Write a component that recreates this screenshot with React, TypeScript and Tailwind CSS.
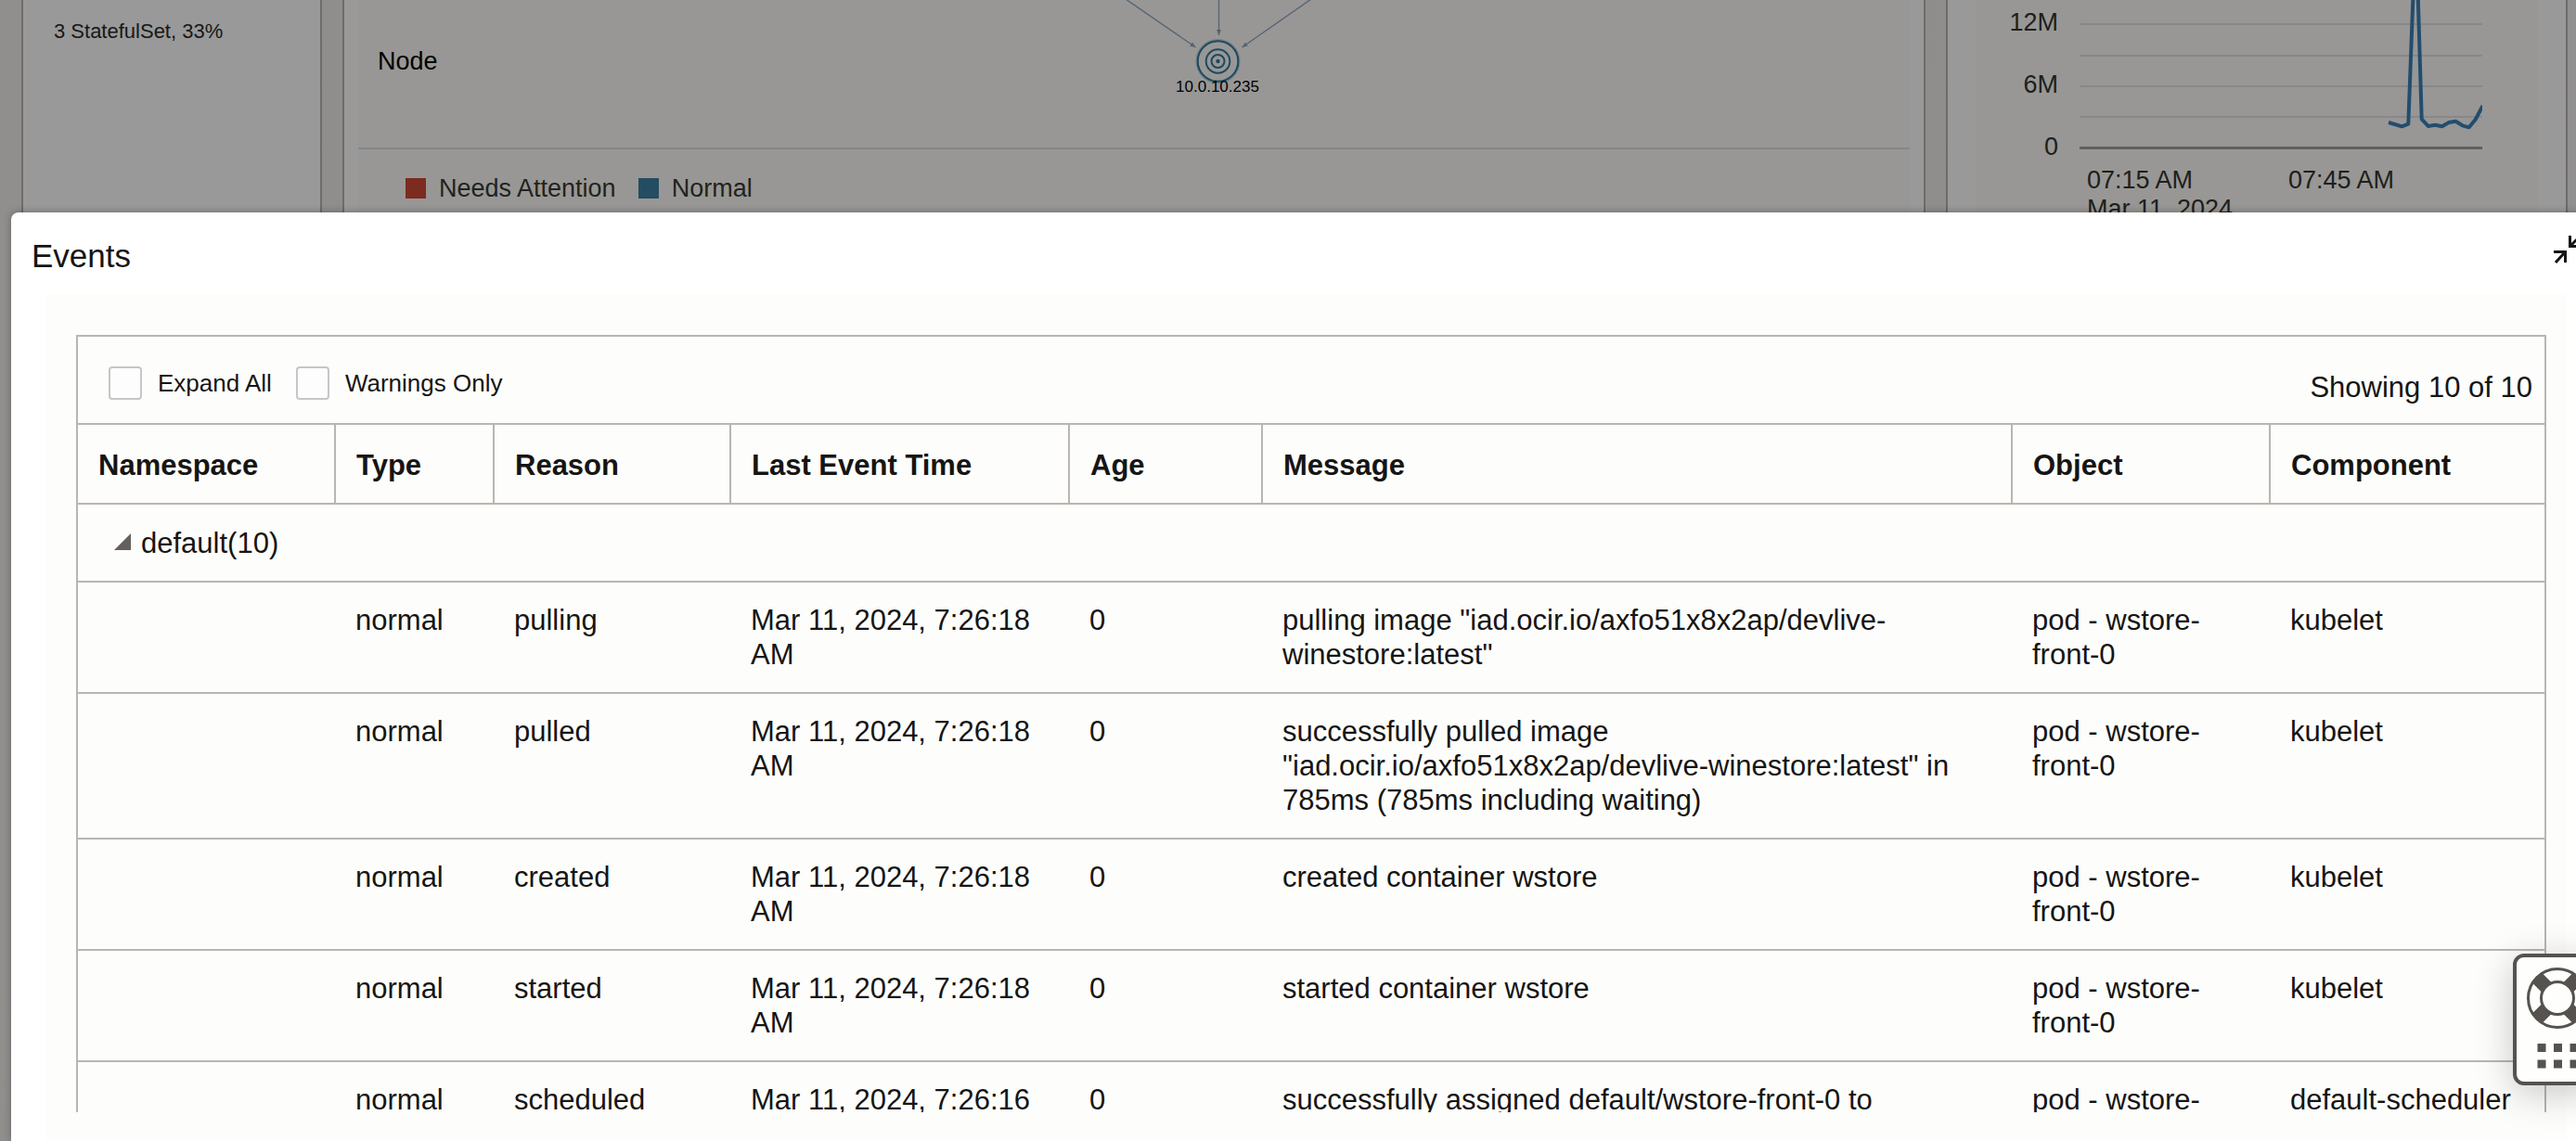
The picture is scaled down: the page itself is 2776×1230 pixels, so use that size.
import React, { useState } from "react";

type EventRow = {
  reason: string;
  time: string;
  message: string;
  component: string;
};

const events: EventRow[] = [
  {
    reason: "pulling",
    time: "Mar 11, 2024, 7:26:18 AM",
    message: 'pulling image "iad.ocir.io/axfo51x8x2ap/devlive-winestore:latest"',
    component: "kubelet",
  },
  {
    reason: "pulled",
    time: "Mar 11, 2024, 7:26:18 AM",
    message:
      'successfully pulled image "iad.ocir.io/axfo51x8x2ap/devlive-winestore:latest" in 785ms (785ms including waiting)',
    component: "kubelet",
  },
  {
    reason: "created",
    time: "Mar 11, 2024, 7:26:18 AM",
    message: "created container wstore",
    component: "kubelet",
  },
  {
    reason: "started",
    time: "Mar 11, 2024, 7:26:18 AM",
    message: "started container wstore",
    component: "kubelet",
  },
  {
    reason: "scheduled",
    time: "Mar 11, 2024, 7:26:16 AM",
    message: "successfully assigned default/wstore-front-0 to 10.0.10.235",
    component: "default-scheduler",
  },
];

function NodeGraph() {
  return (
    <svg width="240" height="110" viewBox="0 0 240 110" aria-label="Node 10.0.10.235">
      <defs>
        <marker id="arrow" markerWidth="7" markerHeight="6" refX="6" refY="3" orient="auto" markerUnits="userSpaceOnUse">
          <path d="M0 0.5L6 3L0 5.5Z" fill="#8fa3c2" />
        </marker>
      </defs>
      <g stroke="#93a7c4" strokeWidth="1.4" fill="none">
        <path d="M20 -1L95.500 51" markerEnd="url(#arrow)" />
        <path d="M120.500 -1V38" markerEnd="url(#arrow)" />
        <path d="M220 -1L145.500 51" markerEnd="url(#arrow)" />
      </g>
      <g fill="none" stroke="#307ba2">
        <circle cx="119.500" cy="66" r="22.500" strokeWidth="3" strokeOpacity="0.3" />
        <circle cx="119.500" cy="66" r="21.800" strokeWidth="2" />
        <circle cx="119.500" cy="66" r="12.800" strokeWidth="2" />
        <circle cx="119.500" cy="66" r="7" strokeWidth="2" />
      </g>
      <circle cx="119.500" cy="66" r="2.200" fill="#307ba2" />
      <text x="119" y="99" textAnchor="middle" fontSize="17" fill="#000">
        10.0.10.235
      </text>
    </svg>
  );
}

function UsageChart() {
  return (
    <div className="flex gap-[23px]">
      <div className="flex w-[89px] flex-col gap-[35px] pt-2 text-right text-[27px] leading-8 text-[#35352f]">
        <span>12M</span>
        <span>6M</span>
        <span>0</span>
      </div>
      <div className="w-[434px]">
        <svg width="434" height="162" viewBox="0 0 434 162" className="block overflow-hidden" aria-hidden="true">
          <g stroke="#e2e2ea" strokeWidth="2">
            <path d="M0 26H434M0 60H434M0 93H434M0 126H434" />
          </g>
          <path d="M0 159.500H434" stroke="#9e9e9a" strokeWidth="3" />
          <path
            d="M333 132L339.700 134L347.300 136.300L354.300 133.700L359.500 -5L361.700 -70L364.700 -5L368.700 128.300L375.700 136L383.300 134.700L390.700 136.300L398 132L405.300 130.700L412.700 135.300L419.700 137.300L426.700 128.700L434.500 114"
            fill="none"
            stroke="#3b81b8"
            strokeWidth="4"
            strokeLinejoin="round"
          />
        </svg>
        <div className="mt-[17px] flex pl-2 text-[27px] leading-[31px] whitespace-nowrap text-[#35352f]">
          <span className="w-[217px]">
            07:15 AM
            <br />
            Mar 11, 2024
          </span>
          <span>07:45 AM</span>
        </div>
      </div>
    </div>
  );
}

function Dashboard() {
  return (
    <main className="flex h-full gap-[22px] bg-[linear-gradient(100deg,#f1efec,#ece9e4_40%,#f2f0f1)] pr-[9px] pl-[23px]">
      <section className="w-[324px] shrink-0 border-x-2 border-[#bab2ac] bg-white pt-5 pl-[33px] text-[22px] leading-7 text-[#2b2b28]">
        3 StatefulSet, 33%
      </section>
      <section className="min-w-0 flex-1 border-x-2 border-[#bab2ac] bg-white px-[15px]">
        <div className="h-full bg-[#fdfcf8]">
          <div className="flex h-[161px] border-b-2 border-[#d9e0e5]">
            <h3 className="w-[182px] pt-[50px] pl-[21px] text-[27px] leading-8 text-black">Node</h3>
            <div className="flex flex-1 justify-center">
              <NodeGraph />
            </div>
          </div>
          <ul className="flex items-center gap-6 pt-[26px] pl-[51px] text-[27px] leading-8 text-[#3a3a36]">
            <li className="flex items-center gap-[14px]">
              <i className="size-[22px] bg-[#cf4834]" />
              Needs Attention
            </li>
            <li className="flex items-center gap-[14px]">
              <i className="size-[22px] bg-[#3c80a3]" />
              Normal
            </li>
          </ul>
        </div>
      </section>
      <section className="w-[670px] shrink-0 border-x-2 border-[#bab2ac] bg-white px-[30px]">
        <div className="h-full bg-[#fdfcf8]">
          <UsageChart />
        </div>
      </section>
    </main>
  );
}

function CheckOption({ label }: { label: string }) {
  const [checked, setChecked] = useState(false);
  return (
    <label className="flex h-9 items-center gap-[17px] text-[26px] leading-8">
      <input
        type="checkbox"
        checked={checked}
        onChange={(e) => setChecked(e.target.checked)}
        className="size-9 appearance-none rounded-[4px] border-2 border-[#c6c5c7] bg-[#fdfdfe] checked:bg-[#55524f]"
      />
      {label}
    </label>
  );
}

function EventsTable() {
  const [open, setOpen] = useState(true);
  const th = "border-r-2 border-b-2 border-[#bab5b0] px-[22px] pt-[25px] pb-[22px] last:border-r-0";
  const td = "border-b-2 border-[#bab5b0] px-[21px] py-[22px]";
  return (
    <div className="border-2 border-[#bab5b0]">
      <div className="flex h-[95px] justify-between border-b-2 border-[#bab5b0] pr-[13px] pl-[33px]">
        <div className="flex gap-[26px] pt-8">
          <CheckOption label="Expand All" />
          <CheckOption label="Warnings Only" />
        </div>
        <p className="self-end pb-5">Showing 10 of 10</p>
      </div>
      <table className="w-full table-fixed border-separate border-spacing-0 text-left align-top">
        <colgroup>
          <col className="w-[278px]" />
          <col className="w-[171px]" />
          <col className="w-[255px]" />
          <col className="w-[365px]" />
          <col className="w-[208px]" />
          <col />
          <col className="w-[278px]" />
          <col className="w-[295px]" />
        </colgroup>
        <thead>
          <tr>
            <th className={th}>Namespace</th>
            <th className={th}>Type</th>
            <th className={th}>Reason</th>
            <th className={th}>Last Event Time</th>
            <th className={th}>Age</th>
            <th className={th}>Message</th>
            <th className={th}>Object</th>
            <th className={th}>Component</th>
          </tr>
        </thead>
        <tbody className="align-top">
          <tr>
            <td colSpan={8} className="border-b-2 border-[#bab5b0] pt-[23px] pb-[22px] pl-[39px]">
              <button
                type="button"
                aria-expanded={open}
                onClick={() => setOpen(!open)}
                className="flex items-center gap-[11px]"
              >
                <svg width="18" height="18" viewBox="0 0 18 18" className="mb-1" aria-hidden="true">
                  <path d="M18 0V18H0Z" fill="#66605c" />
                </svg>
                default(10)
              </button>
            </td>
          </tr>
          {open &&
            events.map((e) => (
              <tr key={e.reason}>
                <td className={td} />
                <td className={td}>normal</td>
                <td className={td}>{e.reason}</td>
                <td className={td}>{e.time}</td>
                <td className={td}>0</td>
                <td className={td}>{e.message}</td>
                <td className={td}>pod - wstore-front-0</td>
                <td className={`${td} whitespace-nowrap`}>{e.component}</td>
              </tr>
            ))}
        </tbody>
      </table>
    </div>
  );
}

function HelpWidget() {
  return (
    <button
      type="button"
      aria-label="Help"
      className="absolute -right-7 bottom-[60px] flex h-[142px] w-24 flex-col items-center gap-4 rounded-xl border-4 border-[#55524f] bg-[#fefefc] pt-[11px] shadow-[0_8px_40px_rgba(0,0,0,0.22)]"
    >
      <svg width="66" height="66" viewBox="0 0 66 66" fill="none" stroke="#55524f" aria-hidden="true">
        <circle cx="33" cy="33" r="31.500" strokeWidth="3" />
        <path d="M10.700 10.700L55.300 55.300M55.300 10.700L10.700 55.300" strokeWidth="15" />
        <circle cx="33" cy="33" r="17.500" strokeWidth="3" fill="#fefefc" />
      </svg>
      <svg width="45" height="27" viewBox="0 0 45 27" fill="#55524f" aria-hidden="true">
        <path d="M0.500 0h9v9h-9zM18 0h9v9h-9zM35.500 0h9v9h-9zM0.500 17.500h9v9h-9zM18 17.500h9v9h-9zM35.500 17.500h9v9h-9z" />
      </svg>
    </button>
  );
}

export default function App() {
  return (
    <div className="relative h-screen overflow-hidden font-['Liberation_Sans',Arial,sans-serif]">
      <Dashboard />
      <div className="absolute inset-0 bg-black/40" />
      <div
        role="dialog"
        aria-labelledby="events-title"
        className="absolute top-[229px] -right-3 bottom-0 left-3 flex flex-col rounded-t-lg bg-white text-[31px] leading-[37px] text-[#161513] shadow-[0_0_8px_rgba(0,0,0,0.3)]"
      >
        <header className="flex h-[88px] shrink-0 items-start justify-between pt-6 pr-1 pl-[22px]">
          <h2 id="events-title" className="text-[35px] leading-[46px]">
            Events
          </h2>
          <button type="button" aria-label="Restore">
            <svg width="32" height="32" viewBox="0 0 32 32" fill="none" stroke="#161513" strokeWidth="3" aria-hidden="true">
              <path d="M17.500 1V12.500H30M18 12L29 1" />
              <path d="M0 18.500H12.500V30M12 19L2 30" />
            </svg>
          </button>
        </header>
        <div className="mr-[22px] ml-[37px] flex min-h-0 flex-1 flex-col bg-[#fdfdfb] pt-11 pr-[22px] pb-[31px] pl-[33px]">
          <div className="min-h-0 flex-1 overflow-hidden">
            <EventsTable />
          </div>
        </div>
      </div>
      <HelpWidget />
    </div>
  );
}
